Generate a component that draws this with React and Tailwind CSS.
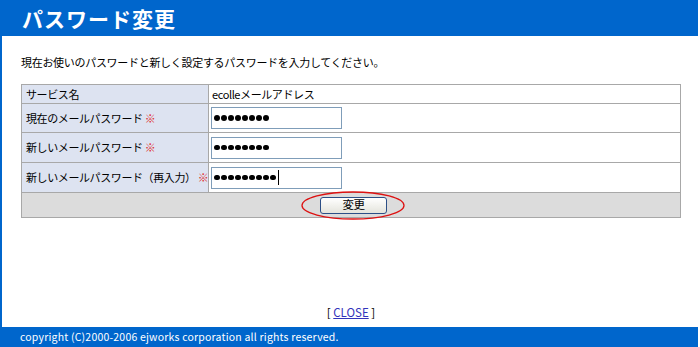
import React from "react";

const font = { fontFamily: '"Noto Sans CJK JP", "Noto Sans", sans-serif' };

function Dots({ n, caret }) {
  return (
    <div className="flex items-center gap-[1.5px] pl-[2px]">
      {Array.from({ length: n }).map((_, i) => (
        <div key={i} className="w-[5.5px] h-[5.5px] rounded-full bg-black" />
      ))}
      {caret && <div className="w-[1px] h-[15px] bg-black ml-[1px]" />}
    </div>
  );
}

function PwInput({ n, caret }) {
  return (
    <div className="w-[131px] h-[22px] border border-[#7f9db9] bg-white flex items-center">
      <Dots n={n} caret={caret} />
    </div>
  );
}

export default function App() {
  const rows = [
    { label: "現在のメールパスワード", n: 8, h: "h-[29px]" },
    { label: "新しいメールパスワード", n: 8, h: "h-[30px]" },
    { label: "新しいメールパスワード（再入力）", n: 9, h: "h-[30px]", caret: true },
  ];
  return (
    <div style={font} className="w-[698px] h-[347px] flex flex-col bg-white border-l-2 border-[#0066cc] text-black">
      <div className="h-[36px] bg-[#0066cc] flex items-center pl-[20px]">
        <span className="text-white text-[21px] font-bold tracking-[1px] leading-none">パスワード変更</span>
      </div>
      <div className="pl-[19px] pt-[17px] text-[11px] tracking-[-0.3px] leading-[18px] whitespace-nowrap">
        現在お使いのパスワードと新しく設定するパスワードを入力してください。
      </div>
      <div className="pl-[19px] pt-[13px]">
        <table className="w-[660px] table-fixed border-collapse text-[11px] tracking-[-0.4px]">
          <colgroup>
            <col className="w-[187px]" />
            <col />
          </colgroup>
          <tbody>
            <tr className="h-[19px]">
              <td className="border border-[#a8a8a8] bg-[#dde3f1] pl-[4px] py-0 leading-none whitespace-nowrap">サービス名</td>
              <td className="border border-[#a8a8a8] pl-[3px] leading-none">ecolleメールアドレス</td>
            </tr>
            {rows.map((r, i) => (
              <tr key={i} className={r.h}>
                <td className="border border-[#a8a8a8] bg-[#dde3f1] pl-[4px] leading-none whitespace-nowrap overflow-hidden">
                  {r.label} <span className="text-[#e03030]">※</span>
                </td>
                <td className="border border-[#a8a8a8] pl-[2px]">
                  <PwInput n={r.n} caret={r.caret} />
                </td>
              </tr>
            ))}
            <tr className="h-[25px]">
              <td colSpan={2} className="border border-[#a8a8a8] bg-[#dcdcdc]">
                <div className="flex justify-center pl-[5px]">
                  <div className="relative">
                    <button className="w-[67px] h-[17px] rounded-[3px] border border-[#2c4f86] bg-gradient-to-b from-white to-[#e4e4dc] text-[11.5px] leading-none flex items-center justify-center">
                      変更
                    </button>
                    <svg className="absolute left-[-20px] top-[-7px]" width="106" height="31" viewBox="0 0 106 31">
                      <ellipse cx="53" cy="15.5" rx="51" ry="13.5" fill="none" stroke="#dd1111" strokeWidth="1.3" />
                    </svg>
                  </div>
                </div>
              </td>
            </tr>
          </tbody>
        </table>
      </div>
      <div className="flex-1" />
      <div className="text-center text-[11.5px] leading-none pb-[9px] pl-[2px]">
        [ <a href="#" className="text-[#3333bb] underline">CLOSE</a> ]
      </div>
      <div className="h-[20px] bg-[#0066cc] flex items-center pl-[18px]">
        <span className="text-white text-[10.5px] tracking-[0.2px] leading-none whitespace-nowrap">copyright (C)2000-2006 ejworks corporation all rights reserved.</span>
      </div>
    </div>
  );
}
